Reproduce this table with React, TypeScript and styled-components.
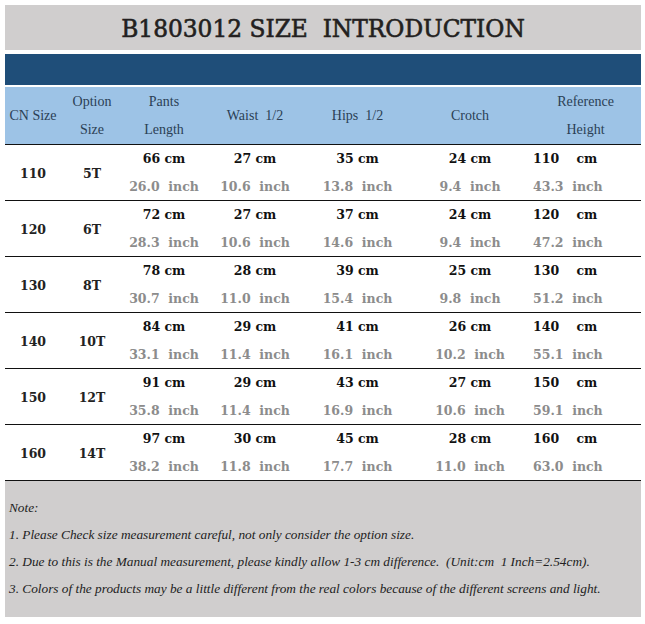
import React from "react";
import styled, { createGlobalStyle } from "styled-components";

const Global = createGlobalStyle`
  html, body { margin: 0; padding: 0; background: #ffffff; }
  body { font-family: "Liberation Serif", serif; }
`;

const Page = styled.div`
  width: 645px;
  height: 624px;
  box-sizing: border-box;
  padding: 5px 4px 0 5px;
  display: flex;
  flex-direction: column;
`;

const TitleBar = styled.div`
  height: 45px;
  background: #d0cece;
  display: flex;
  align-items: center;
  justify-content: center;
  font-family: "DejaVu Serif", serif;
  font-size: 23.3px;
  color: #231f20;
  -webkit-text-stroke: 0.6px #231f20;
  white-space: pre;
  padding-top: 1px;
  box-sizing: border-box;
`;

const BlueBand = styled.div`
  margin-top: 4px;
  height: 31px;
  background: #1f4e79;
`;

const cols = "56px 62px 82px 100px 105px 120px 111px";

const HeaderRow = styled.div`
  margin-top: 2px;
  height: 57px;
  background: #9dc3e6;
  display: grid;
  grid-template-columns: ${cols};
  border-bottom: 1px solid #111;
  font-family: "Liberation Serif", serif;
  font-size: 14px;
  color: #2b3f55;
`;

const HeadCell = styled.div`
  display: flex;
  flex-direction: column;
  align-items: center;
  justify-content: center;
  line-height: 28px;
  white-space: pre;
`;

const Row = styled.div`
  height: 55px;
  display: grid;
  grid-template-columns: ${cols};
  border-bottom: 1px solid #111;
  font-family: "DejaVu Serif", serif;
  font-weight: bold;
  font-size: 12.5px;
`;

const KeyCell = styled.div`
  display: flex;
  align-items: center;
  justify-content: center;
  color: #222;
`;

const ValCell = styled.div<{ $left?: boolean }>`
  display: flex;
  flex-direction: column;
  align-items: ${(p) => (p.$left ? "flex-start" : "center")};
  justify-content: center;
  padding-left: ${(p) => (p.$left ? "3px" : "0")};
  line-height: 28px;
  white-space: pre;
`;

const Cm = styled.span`
  color: #111;
`;

const Inch = styled.span`
  color: #8c8c8c;
`;

const Notes = styled.div`
  height: 136px;
  box-sizing: border-box;
  background: #d0cece;
  padding: 13px 0 0 4px;
  font-family: "Liberation Serif", serif;
  font-style: italic;
  font-size: 13.3px;
  color: #222;
  line-height: 27px;
  display: flex;
  flex-direction: column;
`;

const NoteLine = styled.div`
  white-space: pre;
`;

type R = [string, string, [string, string], [string, string], [string, string], [string, string], [string, string]];

const rows: R[] = [
  ["110", "5T", ["66", "26.0"], ["27", "10.6"], ["35", "13.8"], ["24", "9.4"], ["110", "43.3"]],
  ["120", "6T", ["72", "28.3"], ["27", "10.6"], ["37", "14.6"], ["24", "9.4"], ["120", "47.2"]],
  ["130", "8T", ["78", "30.7"], ["28", "11.0"], ["39", "15.4"], ["25", "9.8"], ["130", "51.2"]],
  ["140", "10T", ["84", "33.1"], ["29", "11.4"], ["41", "16.1"], ["26", "10.2"], ["140", "55.1"]],
  ["150", "12T", ["91", "35.8"], ["29", "11.4"], ["43", "16.9"], ["27", "10.6"], ["150", "59.1"]],
  ["160", "14T", ["97", "38.2"], ["30", "11.8"], ["45", "17.7"], ["28", "11.0"], ["160", "63.0"]],
];

export default function App() {
  return (
    <>
      <Global />
      <Page>
        <TitleBar>{"B1803012 SIZE  INTRODUCTION"}</TitleBar>
        <BlueBand />
        <HeaderRow>
          <HeadCell>CN Size</HeadCell>
          <HeadCell>
            <span>Option</span>
            <span>Size</span>
          </HeadCell>
          <HeadCell>
            <span>Pants</span>
            <span>Length</span>
          </HeadCell>
          <HeadCell>{"Waist  1/2"}</HeadCell>
          <HeadCell>{"Hips  1/2"}</HeadCell>
          <HeadCell>Crotch</HeadCell>
          <HeadCell>
            <span>Reference</span>
            <span>Height</span>
          </HeadCell>
        </HeaderRow>
        {rows.map((r) => (
          <Row key={r[0]}>
            <KeyCell>{r[0]}</KeyCell>
            <KeyCell>{r[1]}</KeyCell>
            {[r[2], r[3], r[4], r[5]].map((v, i) => (
              <ValCell key={i}>
                <Cm>{`${v[0]} cm`}</Cm>
                <Inch>{`${v[1]}  inch`}</Inch>
              </ValCell>
            ))}
            <ValCell $left>
              <Cm>{`${r[6][0]}    cm`}</Cm>
              <Inch>{`${r[6][1]}  inch`}</Inch>
            </ValCell>
          </Row>
        ))}
        <Notes>
          <NoteLine>Note:</NoteLine>
          <NoteLine>1. Please Check size measurement careful, not only consider the option size.</NoteLine>
          <NoteLine>{"2. Due to this is the Manual measurement, please kindly allow 1-3 cm difference.  (Unit:cm  1 Inch=2.54cm)."}</NoteLine>
          <NoteLine>3. Colors of the products may be a little different from the real colors because of the different screens and light.</NoteLine>
        </Notes>
      </Page>
    </>
  );
}
